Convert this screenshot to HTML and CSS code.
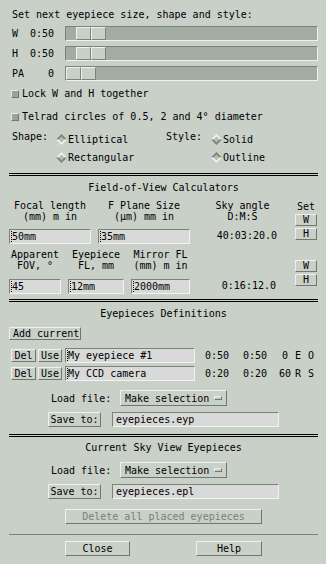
FILE: index.html
```html
<!DOCTYPE html>
<html>
<head>
<meta charset="utf-8">
<link rel="stylesheet" href="styles.css">
</head>
<body>
<div class="win">
  <div class="line title">Set next eyepiece size, shape and style:</div>

  <div class="srow">
    <div class="slbl"><span>W</span><span>0:50</span></div>
    <div class="trough"><div class="thumb" style="margin-left:10px"><i></i><i></i></div></div>
  </div>
  <div class="srow">
    <div class="slbl"><span>H</span><span>0:50</span></div>
    <div class="trough"><div class="thumb" style="margin-left:10px"><i></i><i></i></div></div>
  </div>
  <div class="srow">
    <div class="slbl"><span>PA</span><span>0</span></div>
    <div class="trough"><div class="thumb" style="margin-left:0px"><i></i><i></i></div></div>
  </div>

  <div class="chk chk-lock"><span class="box"></span><span>Lock W and H together</span></div>
  <div class="chk chk-telrad"><span class="box"></span><span>Telrad circles of 0.5, 2 and 4° diameter</span></div>

  <div class="shape">
    <div class="glbl">Shape:</div>
    <div class="radio"><svg class="dia" viewBox="0 0 11 11"><polygon class="dk" points="0,5.5 5.5,0 11,5.5"/><polygon class="lt" points="0,5.5 5.5,11 11,5.5"/><polygon class="in" points="2.5,5.5 5.5,2.5 8.5,5.5 5.5,8.5"/></svg><span>Elliptical</span></div>
    <div class="glbl">Style:</div>
    <div class="radio"><svg class="dia" viewBox="0 0 11 11"><polygon class="lt" points="0,5.5 5.5,0 11,5.5"/><polygon class="dk" points="0,5.5 5.5,11 11,5.5"/><polygon class="in" points="2.5,5.5 5.5,2.5 8.5,5.5 5.5,8.5"/></svg><span>Solid</span></div>
    <div></div>
    <div class="radio"><svg class="dia" viewBox="0 0 11 11"><polygon class="lt" points="0,5.5 5.5,0 11,5.5"/><polygon class="dk" points="0,5.5 5.5,11 11,5.5"/><polygon class="in" points="2.5,5.5 5.5,2.5 8.5,5.5 5.5,8.5"/></svg><span>Rectangular</span></div>
    <div></div>
    <div class="radio"><svg class="dia" viewBox="0 0 11 11"><polygon class="dk" points="0,5.5 5.5,0 11,5.5"/><polygon class="lt" points="0,5.5 5.5,11 11,5.5"/><polygon class="in" points="2.5,5.5 5.5,2.5 8.5,5.5 5.5,8.5"/></svg><span>Outline</span></div>
  </div>

  <div class="dsep sep1"></div>
  <div class="line stitle st1">Field-of-View Calculators</div>

  <div class="fov">
    <div class="calc">
      <div class="cgrid g1">
        <div class="hd">Focal length<br>(mm) m in</div>
        <div class="hd">F Plane Size<br>(µm) mm in</div>
        <div class="hd">Sky angle<br>D:M:S</div>
        <div class="entry"><i class="cur"></i>50mm</div>
        <div class="entry"><i class="cur"></i>35mm</div>
        <div class="val">40:03:20.0</div>
      </div>
      <div class="cgrid g2">
        <div class="hd">Apparent<br>FOV, °</div>
        <div class="hd">Eyepiece<br>FL, mm</div>
        <div class="hd">Mirror FL<br>(mm) m in</div>
        <div class="hd"></div>
        <div class="entry"><i class="cur"></i>45</div>
        <div class="entry"><i class="cur"></i>12mm</div>
        <div class="entry"><i class="cur"></i>2000mm</div>
        <div class="val">0:16:12.0</div>
      </div>
    </div>
    <div class="setcol">
      <div class="setlbl">Set</div>
      <div class="btn sbtn s1">W</div>
      <div class="btn sbtn s2">H</div>
      <div class="btn sbtn s3">W</div>
      <div class="btn sbtn s2">H</div>
    </div>
  </div>

  <div class="dsep sep2"></div>
  <div class="line stitle st2">Eyepieces Definitions</div>

  <div class="row addrow"><div class="btn addbtn">Add current</div></div>

  <div class="row eprow ep1">
    <div class="btn delbtn">Del</div>
    <div class="btn usebtn">Use</div>
    <div class="entry epentry"><i class="cur"></i>My eyepiece #1</div>
    <span class="v v1">0:50</span><span class="v v2">0:50</span><span class="v v3">0</span><span class="v v4">E</span><span class="v v5">O</span>
  </div>
  <div class="row eprow ep2">
    <div class="btn delbtn">Del</div>
    <div class="btn usebtn">Use</div>
    <div class="entry epentry"><i class="cur"></i>My CCD camera</div>
    <span class="v v1">0:20</span><span class="v v2">0:20</span><span class="v v3">60</span><span class="v v4">R</span><span class="v v5">S</span>
  </div>

  <div class="row loadrow lr1">
    <span class="loadlbl">Load file:</span>
    <div class="menubtn"><span>Make selection</span><i class="ind"></i></div>
  </div>
  <div class="row saverow">
    <div class="btn savebtn">Save to:</div>
    <div class="entry saveentry">eyepieces.eyp</div>
  </div>

  <div class="dsep sep3"></div>
  <div class="line stitle st3">Current Sky View Eyepieces</div>

  <div class="row loadrow lr2">
    <span class="loadlbl">Load file:</span>
    <div class="menubtn"><span>Make selection</span><i class="ind"></i></div>
  </div>
  <div class="row saverow">
    <div class="btn savebtn">Save to:</div>
    <div class="entry saveentry">eyepieces.epl</div>
  </div>

  <div class="row delrow"><div class="btn delall">Delete all placed eyepieces</div></div>

  <div class="hsep"></div>

  <div class="row bottom">
    <div class="btn closebtn">Close</div>
    <div class="btn helpbtn">Help</div>
  </div>
</div>
</body>
</html>
```
FILE: styles.css
```css
* { box-sizing: border-box; }
html, body { margin: 0; padding: 0; }
body {
  width: 326px;
  height: 564px;
  overflow: hidden;
  background: #c8d0c8;
  font-family: "DejaVu Sans Mono", "Liberation Mono", monospace;
  font-size: 10px;
  color: #000;
}
.win { padding: 9px 8px 0 9px; }
.line { height: 12px; line-height: 12px; white-space: pre; }
.title { padding-left: 3px; }

/* sliders */
.srow { display: flex; margin-top: 5px; height: 15px; }
.slbl {
  width: 45px;
  padding-left: 3px;
  margin-right: 11px;
  display: flex;
  justify-content: space-between;
  line-height: 15px;
}
.trough {
  flex: 1;
  display: flex;
  background: #a3aca3;
  border-top: 1px solid #7b837b;
  border-left: 1px solid #7b837b;
  border-bottom: 1px solid #eef2ee;
  border-right: 1px solid #eef2ee;
}
.thumb { display: flex; width: 30px; height: 13px; }
.thumb i {
  display: block;
  width: 15px;
  height: 13px;
  background: #c8d0c8;
  border-top: 1px solid #eef2ee;
  border-left: 1px solid #eef2ee;
  border-bottom: 1px solid #7b837b;
  border-right: 1px solid #7b837b;
}

/* check boxes */
.chk { display: flex; align-items: center; height: 12px; line-height: 12px; white-space: pre; }
.chk-lock { margin-top: 7px; }
.chk-telrad { margin-top: 11px; }
.chk .box {
  width: 8px;
  height: 8px;
  margin-left: 2px;
  margin-right: 3px;
  background: #9aa29a;
  border-top: 1px solid #e4e9e4;
  border-left: 1px solid #e4e9e4;
  border-bottom: 1px solid #6f776f;
  border-right: 1px solid #6f776f;
}

/* radio groups */
.shape {
  margin-top: 7px;
  display: grid;
  grid-template-columns: 47px 110px 45px auto;
  grid-template-rows: 18px 18px;
}
.glbl { line-height: 14px; }
.shape .glbl:first-child { padding-left: 3px; }
.radio { display: flex; align-items: center; height: 18px; white-space: pre; }
.dia { width: 11px; height: 11px; margin-right: 1px; display: block; }
.dia .dk { fill: #7b837b; }
.dia .lt { fill: #eef2ee; }
.dia .in { fill: #b4bcb4; }

/* separators and titles */
.dsep { height: 3px; border-top: 1px solid #000; border-bottom: 1px solid #000; }
.sep1 { margin-top: 7px; }
.sep2 { margin-top: 5px; }
.sep3 { margin-top: 7px; }
.stitle { text-align: center; }
.st1 { margin-top: 6px; }
.st2 { margin-top: 6px; }
.st3 { margin-top: 5px; }
.hsep { margin-top: 10px; height: 1px; background: #7b837b; }

/* field-of-view calculators */
.fov { display: flex; margin-top: 6px; }
.calc { width: 286px; }
.cgrid { display: grid; column-gap: 7px; }
.g1 { grid-template-columns: 82px 92px 92px; column-gap: 7px; row-gap: 7px; grid-template-rows: 22px 15px; }
.g1 .hd:nth-child(3) { margin-left: -1px; }
.g2 { margin-top: 5px; grid-template-columns: 52px 56px 59px 79px; row-gap: 8px; grid-template-rows: 22px 15px; }
.hd { text-align: center; line-height: 11px; white-space: pre; }
.val { line-height: 13px; text-align: right; white-space: pre; }
.g1 .val { padding-right: 12px; }

.setcol { width: 22px; margin-left: 0; }
.setlbl { height: 13px; line-height: 13px; text-align: center; }

/* buttons */
.btn {
  display: flex;
  align-items: center;
  justify-content: center;
  background: #c8d0c8;
  border-top: 1px solid #eef2ee;
  border-left: 1px solid #eef2ee;
  border-bottom: 1px solid #6f776f;
  border-right: 1px solid #6f776f;
  white-space: pre;
}
.sbtn { width: 22px; height: 12px; line-height: 10px; }
.s1 { margin-top: 1px; }
.s2 { margin-top: 2px; }
.s3 { margin-top: 20px; }

/* entries */
.entry {
  display: flex;
  align-items: center;
  height: 15px;
  background: #d9d9d9;
  border-top: 1px solid #7b837b;
  border-left: 1px solid #7b837b;
  border-bottom: 1px solid #f0f3f0;
  border-right: 1px solid #f0f3f0;
  padding-left: 1px;
  white-space: pre;
  overflow: hidden;
}
.cur {
  display: block;
  width: 1px;
  height: 11px;
  border-left: 1px dotted #000;
  margin-right: 0;
}

/* eyepiece definitions */
.row { display: flex; align-items: center; }
.addrow { margin-top: 7px; height: 13px; }
.addbtn { width: 72px; height: 13px; justify-content: flex-start; padding-left: 3px; }
.eprow { height: 15px; }
.ep1 { margin-top: 8px; }
.ep2 { margin-top: 3px; }
.delbtn { margin-left: 2px; width: 25px; height: 13px; }
.usebtn { margin-left: 2px; width: 24px; height: 13px; }
.epentry { margin-left: 3px; width: 130px; }
.v { display: block; white-space: pre; }
.v1 { margin-left: 10px; width: 24px; }
.v2 { margin-left: 14px; width: 24px; }
.v3 { margin-left: 12px; width: 12px; text-align: center; }
.v4 { margin-left: 4px; width: 6px; }
.v5 { margin-left: 7px; width: 6px; }

.loadrow { height: 16px; }
.lr1 { margin-top: 9px; }
.lr2 { margin-top: 8px; }
.loadlbl { margin-left: 42px; width: 60px; white-space: pre; }
.menubtn {
  margin-left: 9px;
  width: 107px;
  height: 16px;
  display: flex;
  align-items: center;
  padding-left: 4px;
  background: #c8d0c8;
  border-top: 1px solid #eef2ee;
  border-left: 1px solid #eef2ee;
  border-bottom: 1px solid #6f776f;
  border-right: 1px solid #6f776f;
  white-space: pre;
}
.ind {
  display: block;
  width: 8px;
  height: 4px;
  margin-left: 5px;
  border-top: 1px solid #eef2ee;
  border-left: 1px solid #eef2ee;
  border-bottom: 1px solid #6f776f;
  border-right: 1px solid #6f776f;
}
.saverow { margin-top: 6px; height: 15px; }
.savebtn { margin-left: 39px; width: 53px; height: 15px; }
.saveentry { margin-left: 11px; width: 167px; padding-left: 3px; }

.delrow { margin-top: 10px; height: 15px; }
.delall { margin-left: 56px; width: 197px; height: 15px; color: #7a817a; }

.bottom { margin-top: 6px; height: 15px; }
.closebtn { margin-left: 56px; width: 65px; height: 15px; }
.helpbtn { margin-left: 66px; width: 66px; height: 15px; }
```
